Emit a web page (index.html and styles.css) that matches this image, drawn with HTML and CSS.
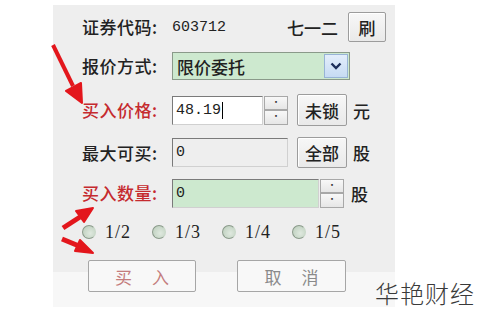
FILE: index.html
```html
<!DOCTYPE html>
<html lang="zh">
<head>
  <meta charset="UTF-8">
  <title>买入委托</title>
  <link rel="stylesheet" href="styles.css">
</head>
<body>
  <div class="panel">
    <div class="row r1">
      <span class="label">证券代码:</span>
      <span class="code">603712</span>
      <span class="name">七一二</span>
      <button class="btn btn-refresh">刷</button>
    </div>
    <div class="row r2">
      <span class="label">报价方式:</span>
      <div class="select">
        <span>限价委托</span>
        <span class="drop">
          <svg width="12" height="8" viewBox="0 0 12 8"><path d="M1.5 1.5 L6 6 L10.5 1.5" fill="none" stroke="#1d2f5a" stroke-width="2.4"/></svg>
        </span>
      </div>
    </div>
    <div class="row r3">
      <span class="label red">买入价格:</span>
      <div class="input w-price mono">48.19<i class="caret"></i></div>
      <div class="spin"><span>&#729;</span><span>&#729;</span></div>
      <button class="btn btn-side">未锁</button>
      <span class="unit">元</span>
    </div>
    <div class="row r4">
      <span class="label">最大可买:</span>
      <div class="input w-max mono disabled">0</div>
      <button class="btn btn-side">全部</button>
      <span class="unit">股</span>
    </div>
    <div class="row r5">
      <span class="label red">买入数量:</span>
      <div class="input w-qty mono green">0</div>
      <div class="spin"><span>&#729;</span><span>&#729;</span></div>
      <span class="unit">股</span>
    </div>
    <div class="row r6">
      <label class="radio"><i></i>1/2</label>
      <label class="radio"><i></i>1/3</label>
      <label class="radio"><i></i>1/4</label>
      <label class="radio"><i></i>1/5</label>
    </div>
    <div class="row r7">
      <button class="btn big buy">买 入</button>
      <button class="btn big cancel">取 消</button>
    </div>
  </div>

  <div class="mark">华艳财经</div>

  <svg class="arrows" width="120" height="270" viewBox="0 0 120 270">
    <g fill="#e3161c" stroke="#e3161c" stroke-linejoin="round">
      <line x1="53" y1="45" x2="73" y2="86" stroke-width="4"/>
      <polygon points="82,103 81,83 66,91" stroke-width="2"/>
      <line x1="63" y1="228" x2="80" y2="217" stroke-width="5"/>
      <polygon points="93,208 76,211 84,222" stroke-width="2"/>
      <line x1="62" y1="239" x2="79" y2="246" stroke-width="5"/>
      <polygon points="93,253 80,240 75,251" stroke-width="2"/>
    </g>
  </svg>
</body>
</html>
```

FILE: styles.css
```css
body {
  margin: 0;
  background: #ffffff;
  font-family: "Noto Sans CJK SC", "DejaVu Sans", sans-serif;
  color: #222;
}
.panel {
  margin: 5px 0 0 53px;
  width: 342px;
  height: 302px;
  box-sizing: border-box;
  padding: 7px 9px 0 29px;
  background: linear-gradient(#eeeeee 0, #eeeeee 267px, #f7f7f7 267px);
  display: flex;
  flex-direction: column;
}
.row {
  display: flex;
  align-items: center;
}
.r1 { height: 30px; }
.r2 { height: 28px; margin-top: 10px; }
.r3 { height: 32px; margin-top: 14px; }
.r4 { height: 31px; margin-top: 11px; }
.r5 { height: 30px; margin-top: 10px; }
.r6 { height: 20px; margin-top: 14px; }
.r7 { height: 32px; margin-top: 18px; }

.label {
  width: 90px;
  font-size: 17px;
  line-height: 20px;
  font-weight: 500;
  letter-spacing: 0.5px;
  flex-shrink: 0;
}
.red { color: #c52a2e; }
.mono { font-family: "Liberation Mono", monospace; }
.code {
  font-family: "Liberation Mono", monospace;
  font-size: 15px;
}
.name {
  margin-left: auto;
  font-size: 17px;
  font-weight: 500;
  margin-right: 10px;
}
.btn {
  font-family: "Noto Sans CJK SC", sans-serif;
  font-size: 17px;
  font-weight: 500;
  color: #222;
  background: linear-gradient(#f7f7f7, #e9e9e9);
  border: 1px solid #9c9c9c;
  box-shadow: inset 1px 1px 0 #ffffff;
  border-radius: 2px;
  padding: 0;
  line-height: 1;
}
.btn-refresh {
  width: 38px;
  height: 30px;
}
.select {
  width: 178px;
  height: 28px;
  box-sizing: border-box;
  border: 1px solid #8a9a8a;
  background: #cde9cf;
  display: flex;
  align-items: center;
  padding-left: 4px;
  font-size: 17px;
  font-weight: 500;
}
.drop {
  margin-left: auto;
  width: 24px;
  height: 24px;
  margin-right: 1px;
  box-sizing: border-box;
  border: 1px solid #98b4d6;
  background: linear-gradient(#e3eefb, #c6dbf3);
  display: flex;
  align-items: center;
  justify-content: center;
}
.input {
  height: 29px;
  box-sizing: border-box;
  border: 1px solid #7a7a7a;
  border-right-color: #d0d0d0;
  border-bottom-color: #d0d0d0;
  background: #ffffff;
  font-size: 15px;
  display: flex;
  align-items: center;
  padding-left: 3px;
}
.w-price { width: 91px; }
.w-max { width: 116px; }
.w-qty { width: 147px; }
.disabled { background: #eeeeee; }
.green { background: #cde9cf; }
.caret {
  display: inline-block;
  width: 1px;
  height: 17px;
  background: #000;
  margin-left: 1px;
}
.spin {
  width: 24px;
  height: 29px;
  display: flex;
  flex-direction: column;
  margin-left: 1px;
}
.spin span {
  flex: 1;
  border: 1px solid #a8a8a8;
  background: linear-gradient(#f8f8f8, #e6e6e6);
  font-size: 10px;
  line-height: 10px;
  text-align: center;
  color: #333;
}
.btn-side {
  width: 50px;
  height: 32px;
  margin-left: 9px;
}
.r4 .btn-side { margin-left: 9px; height: 31px; }
.unit {
  font-size: 17px;
  font-weight: 500;
  margin-left: 6px;
}
.r5 .unit { margin-left: 7px; }
.radio {
  display: flex;
  align-items: center;
  width: 70px;
  font-family: "Liberation Serif", serif;
  font-size: 18px;
  letter-spacing: 1px;
  color: #222;
}
.radio i {
  width: 12px;
  height: 12px;
  border-radius: 50%;
  border: 1px solid #8a9a8a;
  border-right-color: #c8d8c8;
  background: radial-gradient(circle at 60% 60%, #dfe9df, #b9cbb9);
  margin-right: 9px;
}
.big {
  height: 32px;
  width: 108px;
  background: #f8f8f8;
  border: 1px solid #a6a6a6;
  box-shadow: none;
  font-size: 17px;
  font-weight: 400;
  letter-spacing: 8px;
  padding-left: 8px;
}
.buy {
  margin-left: 6px;
  color: #c47d7d;
}
.cancel {
  margin-left: 41px;
  width: 109px;
  color: #8a8a8a;
}
.mark {
  position: absolute;
  left: 375px;
  top: 275px;
  font-size: 24px;
  font-weight: 300;
  color: #3a3a3a;
  letter-spacing: 1px;
}
.arrows {
  position: absolute;
  left: 0;
  top: 0;
}
```
